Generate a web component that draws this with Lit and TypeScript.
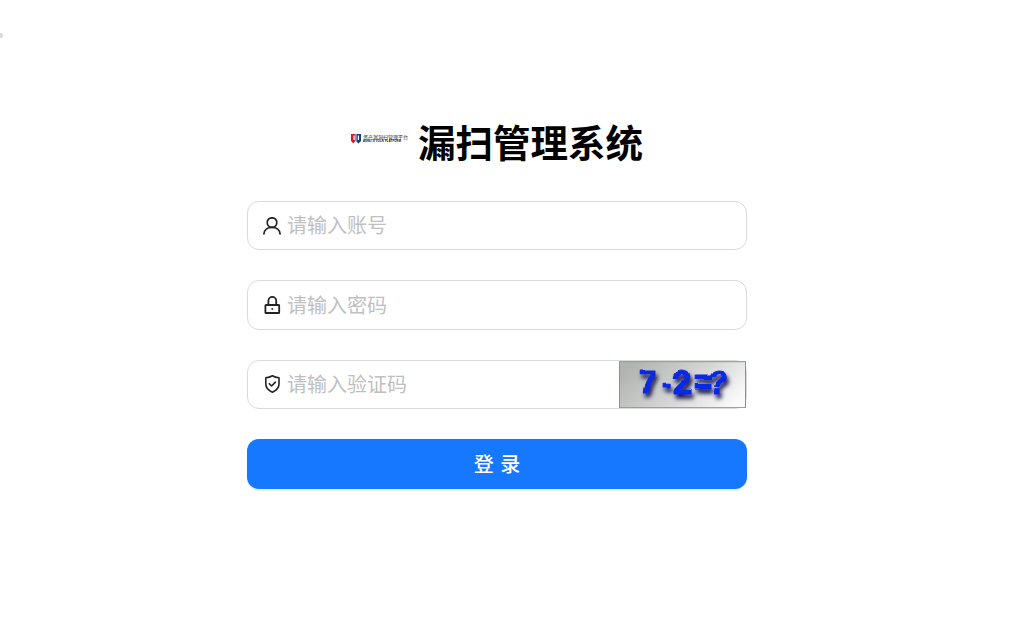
import { LitElement, html, css } from "lit";
import { customElement } from "lit/decorators.js";

const userIcon = html`<svg class="icon" viewBox="0 0 18 18" fill="none" stroke="#222" stroke-width="1.7" stroke-linecap="round"><circle cx="9" cy="5.600" r="4.800"/><path d="M.9 17c.3-4 3.500-6.600 8.100-6.600s7.800 2.600 8.100 6.600"/></svg>`;
const lockIcon = html`<svg class="icon" viewBox="0 0 18 18" fill="none" stroke="#222" stroke-width="1.8"><rect x="2.400" y="9" width="13.800" height="8" rx=".6"/><path d="M5.400 9V4.800a3.900 3.900 0 0 1 7.800 0V9"/><path d="M9.300 12.200v1.600" stroke-width="1.800"/></svg>`;
const shieldIcon = html`<svg class="icon" viewBox="0 0 18 18" fill="none" stroke="#222" stroke-width="1.600" stroke-linejoin="round" stroke-linecap="round"><path d="M9.400 .7c2 1.200 4.100 1.800 6.600 2v6.400c0 3.900-2.900 6.600-6.600 8.200C5.700 15.700 2.800 13 2.800 9.100V2.700C5.300 2.500 7.400 1.900 9.400 .7z"/><path d="M6.300 8.700l2.300 2.300 3.800-3.900"/></svg>`;

@customElement("app-root")
export class AppRoot extends LitElement {
  static styles = css`
    :host {
      display: block;
      min-height: 621px;
      background: #fff;
      font-family: "Noto Sans CJK SC", "Noto Sans", sans-serif;
      overflow: hidden;
    }
    .page {
      display: flex;
      flex-direction: column;
      align-items: center;
      padding: 116px 23px 0 0;
    }
    .title {
      box-sizing: border-box;
      display: flex;
      align-items: center;
      justify-content: center;
      gap: 10px;
      height: 50px;
      margin: 0 0 35px;
      width: 500px;
      padding-right: 1px;
    }
    .logo {
      box-sizing: border-box;
      display: flex;
      align-items: center;
      gap: 2px;
      width: 58px;
      height: 11px;
      margin-bottom: 5px;
      padding-left: 1px;
    }
    .logo svg { width: 10px; height: 10px; flex: none; }
    .logo-text {
      display: flex;
      flex-direction: column;
      white-space: nowrap;
    }
    .logo-cn { font-size: 5px; height: 6px; line-height: 6px; color: #333; }
    .logo-en { font-size: 2.600px; height: 3px; line-height: 3px; font-weight: 700; color: #000; font-family: "Liberation Sans", sans-serif; letter-spacing: .25px; }
    h1 {
      margin: 0;
      font-size: 37.500px;
      line-height: 50px;
      font-weight: 700;
      color: #000;
    }
    form {
      width: 500px;
      display: flex;
      flex-direction: column;
      gap: 30px;
    }
    .field {
      box-sizing: border-box;
      height: 49.330px;
      display: flex;
      align-items: center;
      border: 1px solid #d9d9d9;
      border-radius: 12px;
      padding-left: 15px;
      background: #fff;
    }
    .icon { width: 18px; height: 18px; flex: none; margin-right: 6px; }
    .ph {
      font-size: 20px;
      color: #bfbfbf;
      line-height: 1;
      flex: 1;
      padding-bottom: 0.6px;
    }
    .captcha {
      width: 127px;
      height: 47.330px;
      flex: none;
      display: block;
    }
    button {
      height: 50px;
      border: 0;
      border-radius: 12px;
      background: #1677ff;
      color: #fff;
      font: 500 20px "Noto Sans CJK SC", sans-serif;
      word-spacing: 2.200px;
      box-shadow: 0 2px 0 rgba(5, 145, 255, 0.1);
      padding: 0;
    }
    .dot {
      position: absolute;
      left: -2px;
      top: 33px;
      width: 5px;
      height: 5px;
      border-radius: 50%;
      background: #d5dae0;
    }
    .cap-text {
      font: 700 31px "Liberation Sans", sans-serif;
      fill: #0a28e6;
      stroke: #0a28e6;
      stroke-width: 1.200px;
      stroke-linejoin: round;
    }
  `;

  render() {
    return html`
      <div class="dot"></div>
      <div class="page">
        <div class="title">
          <div class="logo">
            <svg viewBox="0 0 10 10">
              <path d="M0 0h4.600v6.500L2.500 9.500 0 7z" fill="#c8202e"/>
              <path d="M5.400 0H10v7L7.500 9.500 5.400 7.500z" fill="#1c3a8a"/>
              <path d="M2.500 1.500h1.200v4.500H2.500zM6.800 1.500H8v4.500H6.800z" fill="#fff"/>
            </svg>
            <div class="logo-text">
              <span class="logo-cn">资产漏洞扫管理平台</span>
              <span class="logo-en">ASSETS VULN PLATFORM</span>
            </div>
          </div>
          <h1>漏扫管理系统</h1>
        </div>
        <form>
          <div class="field">${userIcon}<span class="ph">请输入账号</span></div>
          <div class="field">${lockIcon}<span class="ph">请输入密码</span></div>
          <div class="field">
            ${shieldIcon}<span class="ph">请输入验证码</span>
            <svg class="captcha" viewBox="0 0 127 47">
              <defs>
                <linearGradient id="g" x1="0" x2="1" y1="0.300" y2="0.700">
                  <stop offset="0" stop-color="#b0b4b0"/>
                  <stop offset="0.550" stop-color="#d6d6d6"/>
                  <stop offset="1" stop-color="#fafafa"/>
                </linearGradient>
                <filter id="w" x="-15%" y="-40%" width="130%" height="190%" color-interpolation-filters="sRGB">
                  <feTurbulence type="fractalNoise" baseFrequency="0.045" numOctaves="1" seed="12" result="n"/>
                  <feDisplacementMap in="SourceGraphic" in2="n" scale="6" xChannelSelector="R" yChannelSelector="G" result="d"/>
                  <feGaussianBlur in="d" stdDeviation="0.500" result="soft"/>
                  <feOffset in="d" dx="2" dy="4" result="o"/>
                  <feGaussianBlur in="o" stdDeviation="2" result="sb"/>
                  <feFlood flood-color="#101048"/>
                  <feComposite in2="sb" operator="in" result="shadow"/>
                  <feMerge>
                    <feMergeNode in="shadow"/>
                    <feMergeNode in="soft"/>
                  </feMerge>
                </filter>
              </defs>
              <rect x="0.500" y="0.500" width="126" height="46" fill="url(#g)" stroke="#6fa86f"/>
              <text class="cap-text" x="20 43 55 75 89" y="32" filter="url(#w)">7-2=?</text>
            </svg>
          </div>
          <button type="button">登 录</button>
        </form>
      </div>
    `;
  }
}
